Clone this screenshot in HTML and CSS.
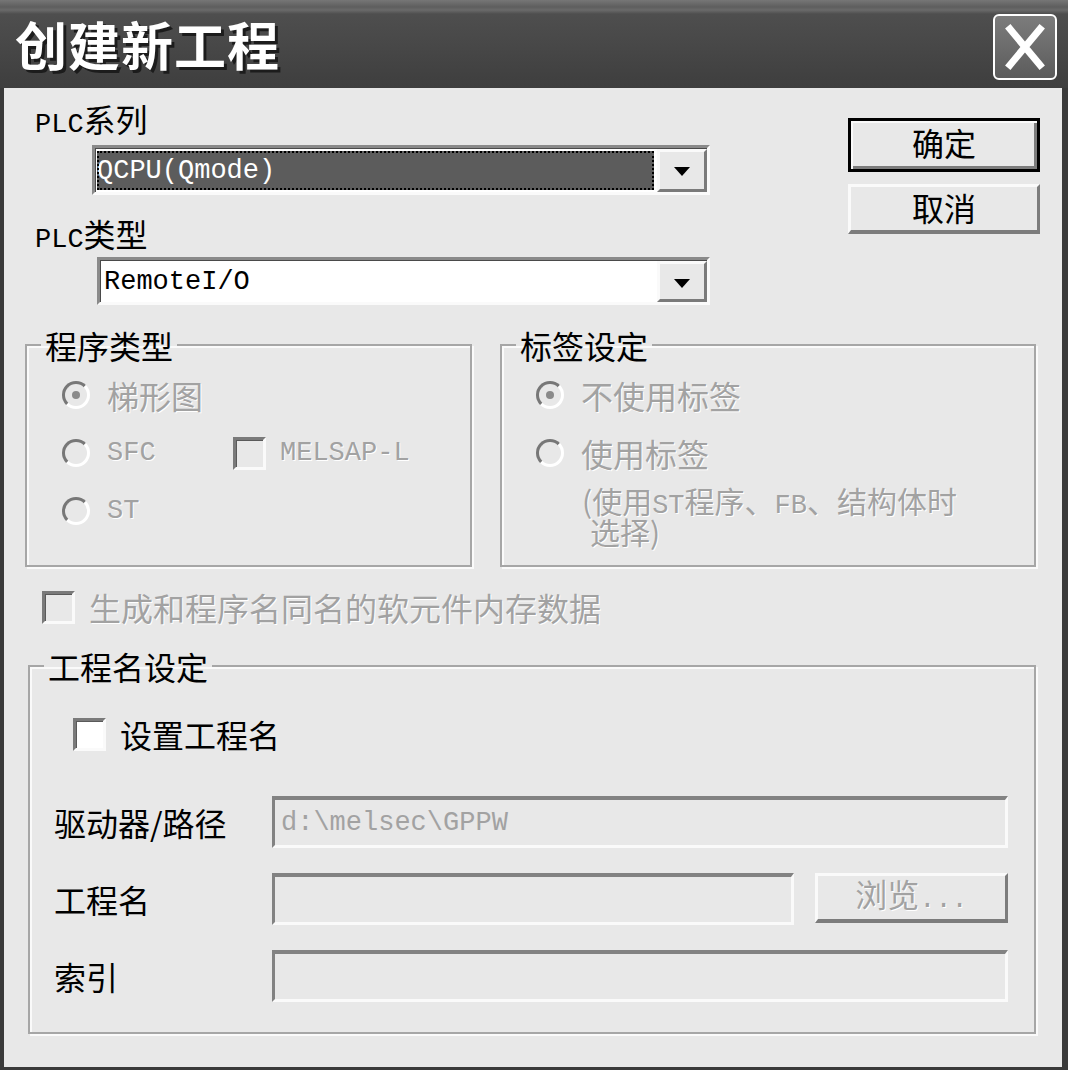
FILE: index.html
```html
<!DOCTYPE html>
<html lang="zh-CN">
<head>
    <meta charset="UTF-8">
    <title>创建新工程</title>
    <link rel="stylesheet" href="styles.css">
</head>
<body>

<div class="window">
    <div class="titlebar">
        <span class="title">创建新工程</span>
        <button class="close" type="button" aria-label="关闭">
            <svg width="44" height="48" viewBox="0 0 44 48">
                <path d="M7 6 L37 42 M37 6 L7 42" stroke="#fff" stroke-width="7" stroke-linecap="square"/>
            </svg>
        </button>
    </div>

    <div class="client">
        <div class="top">
            <div class="plc">
                <div class="label"><span class="mono">PLC</span>系列</div>
                <div class="combo combo-series">
                    <div class="combo-value selected"><span class="focus mono">QCPU(Qmode)</span></div>
                    <span class="combo-arrow"></span>
                </div>
                <div class="label label-type"><span class="mono">PLC</span>类型</div>
                <div class="combo combo-type">
                    <div class="combo-value"><span class="mono">RemoteI/O</span></div>
                    <span class="combo-arrow"></span>
                </div>
            </div>
            <div class="actions">
                <button class="btn btn-default" type="button">确定</button>
                <button class="btn" type="button">取消</button>
            </div>
        </div>

        <div class="groups">
            <fieldset class="group group-program">
                <legend>程序类型</legend>
                <div class="group-body">
                    <div class="opt disabled"><span class="radio checked"></span>梯形图</div>
                    <div class="opt-row">
                        <div class="opt disabled opt-sfc"><span class="radio"></span><span class="mono">SFC</span></div>
                        <div class="opt disabled"><span class="check"></span><span class="mono">MELSAP-L</span></div>
                    </div>
                    <div class="opt disabled"><span class="radio"></span><span class="mono">ST</span></div>
                </div>
            </fieldset>

            <fieldset class="group group-label">
                <legend>标签设定</legend>
                <div class="group-body">
                    <div class="opt disabled"><span class="radio checked"></span>不使用标签</div>
                    <div class="opt disabled"><span class="radio"></span>使用标签</div>
                    <div class="note disabled">
                        <div class="note-line">(使用<span class="mono">ST</span>程序、<span class="mono">FB</span>、结构体时</div>
                        <div class="note-line note-wrap">选择)</div>
                    </div>
                </div>
            </fieldset>
        </div>

        <div class="opt disabled opt-device"><span class="check"></span>生成和程序名同名的软元件内存数据</div>

        <fieldset class="group group-project">
            <legend>工程名设定</legend>
            <div class="group-body">
                <div class="opt"><span class="check enabled"></span>设置工程名</div>
                <div class="fields">
                    <div class="field-label">驱动器/路径</div>
                    <div class="field field-wide"><span class="mono">d:\melsec\GPPW</span></div>

                    <div class="field-label">工程名</div>
                    <div class="field-pair">
                        <div class="field"></div>
                        <button class="btn btn-browse disabled" type="button">浏览<span class="mono">...</span></button>
                    </div>

                    <div class="field-label">索引</div>
                    <div class="field field-wide"></div>
                </div>
            </div>
        </fieldset>
    </div>
</div>

</body>
</html>
```

FILE: styles.css
```css
body {
    margin: 0;
    font-family: "Noto Sans CJK SC", "Noto Sans", sans-serif;
    font-size: 32px;
    color: #000;
}

.window {
    width: 1068px;
    height: 1070px;
    display: flex;
    flex-direction: column;
    background: #3a3a3a;
}

.mono {
    font-family: "Liberation Mono", "Noto Sans CJK SC", monospace;
    font-size: 27px;
}

/* title bar */
.titlebar {
    height: 88px;
    flex: none;
    display: flex;
    align-items: center;
    justify-content: space-between;
    padding: 0 11px 0 15px;
    background: linear-gradient(#767676 0, #5e5e5e 7px, #6a6a6a 10px, #4e4e4e 14px, #484848 50%, #3e3e3e 100%);
}

.title {
    font-size: 52px;
    font-weight: bold;
    color: #fff;
    line-height: 60px;
    letter-spacing: 1px;
    text-shadow: 3px 3px 0 #1c1c1c;
}

.close {
    width: 64px;
    height: 66px;
    margin-top: 6px;
    padding: 0;
    border: 2px solid #fff;
    border-radius: 6px;
    background: linear-gradient(#7c7c7c, #5c5c5c);
    display: flex;
    align-items: center;
    justify-content: center;
}

/* dialog client area */
.client {
    flex: 1;
    margin: 0 6px 3px 4px;
    padding: 12px 26px 0 21px;
    background: #e8e8e8;
}

.top {
    display: flex;
    justify-content: space-between;
}

.label {
    height: 36px;
    line-height: 36px;
    margin-left: 10px;
}

.label-type {
    margin-top: 20px;
}

.combo {
    display: flex;
    box-sizing: border-box;
    border: 3px solid;
    border-color: #8a8a8a #fafafa #fafafa #8a8a8a;
    box-shadow: inset 1px 1px 0 #4a4a4a;
    background: #fff;
}

.combo-series {
    width: 618px;
    height: 50px;
    margin: 9px 0 0 67px;
}

.combo-type {
    width: 613px;
    height: 48px;
    margin: 6px 0 0 72px;
}

.combo-value {
    flex: 1;
    display: flex;
    align-items: center;
    padding: 2px 2px 0 4px;
}

.combo-value.selected {
    padding: 3px 3px 2px 2px;
}

.focus {
    flex: 1;
    align-self: stretch;
    display: flex;
    align-items: center;
    background: #5c5c5c;
    color: #fff;
    outline: 2px dotted #000;
    outline-offset: -2px;
}

.combo-arrow {
    width: 50px;
    box-sizing: border-box;
    margin: 1px 0 0;
    border: 3px solid;
    border-color: #fafafa #7a7a7a #7a7a7a #fafafa;
    background: #e8e8e8;
    position: relative;
}

.combo-arrow::after {
    content: "";
    position: absolute;
    left: 14px;
    top: 15px;
    border-left: 8px solid transparent;
    border-right: 8px solid transparent;
    border-top: 9px solid #000;
}

.actions {
    display: flex;
    flex-direction: column;
    gap: 12px;
    margin: 18px -4px 0 0;
}

.btn {
    width: 192px;
    height: 50px;
    padding: 0 0 4px;
    font-family: inherit;
    font-size: 32px;
    line-height: 1;
    color: #000;
    background: #e8e8e8;
    border: 3px solid;
    border-color: #fafafa #7c7c7c #7c7c7c #fafafa;
    border-bottom-width: 4px;
}

.btn-default {
    height: 54px;
    padding-bottom: 6px;
    border: 3px solid #000;
    box-shadow: inset 2px 2px 0 #fafafa, inset -3px -3px 0 #7c7c7c;
}

/* group boxes */
.groups {
    display: flex;
    justify-content: space-between;
    margin-top: 24px;
}

.group {
    margin: 0;
    padding: 0;
    border: 2px solid #a6a6a6;
    box-shadow: inset 2px 2px 0 #fafafa, 2px 2px 0 #fafafa;
}

.group legend {
    margin-left: 14px;
    padding: 0 4px;
    line-height: 32px;
}

.group-program {
    width: 447px;
    height: 238px;
    box-sizing: border-box;
}

.group-label {
    width: 536px;
    height: 238px;
    box-sizing: border-box;
}

.group-body {
    display: flex;
    flex-direction: column;
    gap: 18px;
    padding: 14px 0 0 35px;
}

.group-label .group-body {
    padding-left: 34px;
}

.opt {
    height: 40px;
    display: flex;
    align-items: center;
}

.opt-row {
    display: flex;
}

.opt-sfc {
    width: 171px;
}

.disabled {
    color: #a2a2a2;
    text-shadow: 1px 1px 0 #fff;
}

.radio {
    width: 28px;
    height: 28px;
    box-sizing: border-box;
    margin-right: 17px;
    border: 3px solid;
    border-color: #777 #fff #fff #777;
    border-radius: 50%;
    display: flex;
    align-items: center;
    justify-content: center;
}

.radio.checked::after {
    content: "";
    width: 8px;
    height: 8px;
    border-radius: 50%;
    background: #8a8a8a;
}

.check {
    width: 33px;
    height: 33px;
    box-sizing: border-box;
    margin-right: 14px;
    border: 3px solid;
    border-color: #7a7a7a #fafafa #fafafa #7a7a7a;
    box-shadow: inset 1px 1px 0 #5a5a5a;
    background: #e8e8e8;
}

.check.enabled {
    background: #fff;
}

.note {
    margin: -6px 0 0 46px;
    font-size: 30px;
}

.note-line {
    height: 31px;
    line-height: 31px;
    white-space: nowrap;
}

.note-line .mono {
    line-height: 31px;
}

.note-wrap {
    padding-left: 8px;
}

.opt-device {
    margin: 22px 0 0 17px;
    height: 36px;
}

.group-project {
    width: 1008px;
    height: 384px;
    box-sizing: border-box;
    margin: 25px 0 0 3px;
}

.group-project .group-body {
    gap: 0;
    padding: 32px 26px 0 24px;
}

.group-project .opt {
    padding-left: 19px;
}

.fields {
    display: grid;
    grid-template-columns: 218px 1fr;
    align-items: center;
    row-gap: 25px;
    margin-top: 42px;
}

.field {
    height: 52px;
    box-sizing: border-box;
    display: flex;
    align-items: center;
    padding: 0 6px;
    border: 3px solid;
    border-top-width: 4px;
    border-color: #828282 #fafafa #fafafa #828282;
    background: #e8e8e8;
    color: #a2a2a2;
}

.field-pair {
    display: flex;
    gap: 21px;
}

.field-pair .field {
    flex: 1;
}

.btn-browse {
    width: 193px;
    height: 50px;
    color: #a2a2a2;
}
```
